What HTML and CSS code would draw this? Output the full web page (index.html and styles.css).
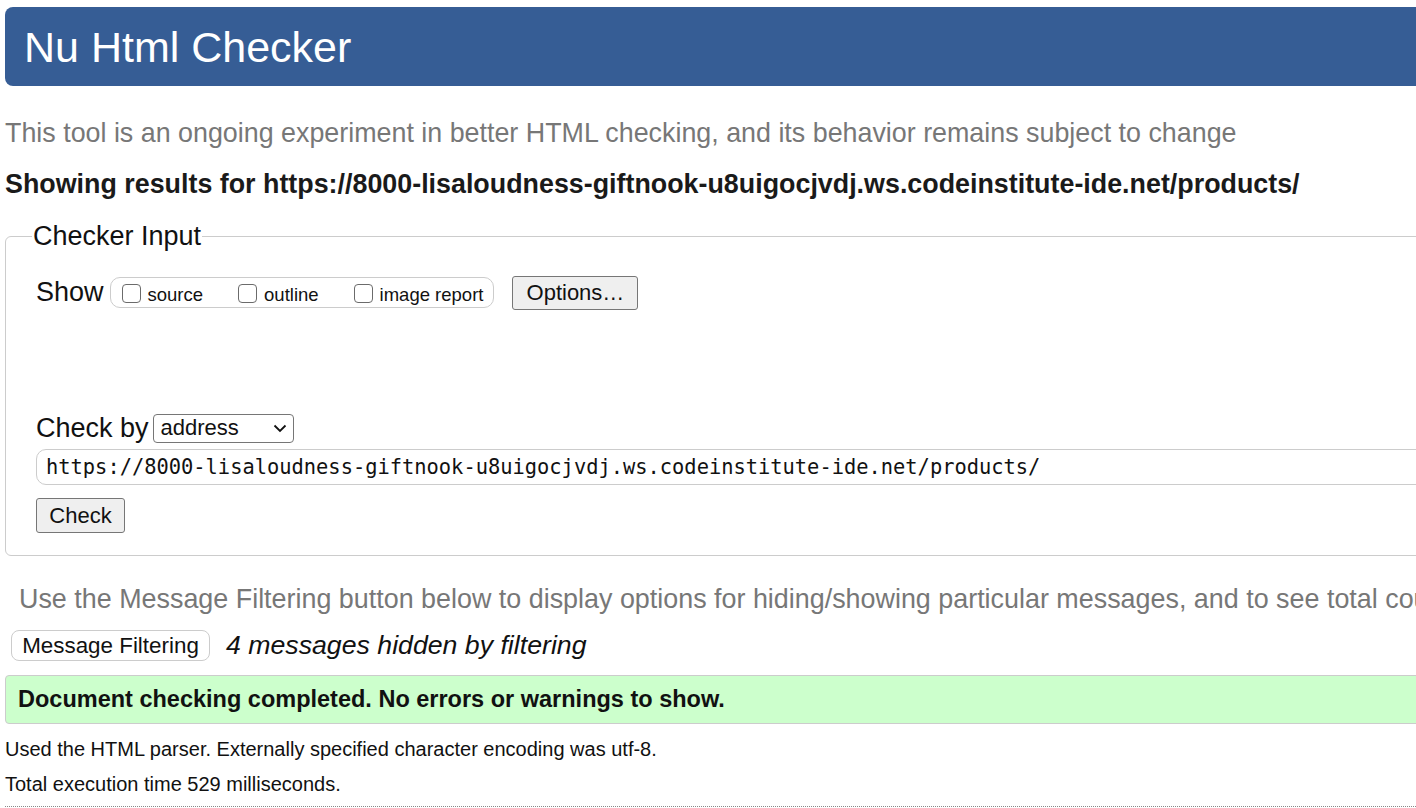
FILE: index.html
```html
<!DOCTYPE html>
<html lang="en">
<head>
<meta charset="utf-8">
<title>Nu Html Checker</title>
<link rel="stylesheet" href="styles.css">
</head>
<body>
<div class="page">
  <h1 class="banner">Nu Html Checker</h1>
  <p class="intro">This tool is an ongoing experiment in better HTML checking, and its behavior remains subject to change</p>
  <p class="results">Showing results for https://8000-lisaloudness-giftnook-u8uigocjvdj.ws.codeinstitute-ide.net/products/</p>
  <fieldset class="checker">
    <legend class="legend">Checker Input</legend>
    <div class="show-row">
      <span class="show-label">Show</span>
      <span class="checks">
        <label class="check"><span class="box"></span>source</label>
        <label class="check"><span class="box"></span>outline</label>
        <label class="check"><span class="box"></span>image report</label>
      </span>
      <button class="btn btn-options" type="button">Options…</button>
    </div>
    <div class="checkby-row">
      <span class="checkby-label">Check by</span>
      <span class="select">address<svg class="chev" width="14" height="9" viewBox="0 0 14 9"><path d="M1.5 1.5 L7 7 L12.5 1.5" fill="none" stroke="#111" stroke-width="1.8"/></svg></span>
    </div>
    <div class="url">https://8000-lisaloudness-giftnook-u8uigocjvdj.ws.codeinstitute-ide.net/products/</div>
    <button class="btn btn-check" type="button">Check</button>
  </fieldset>
  <p class="filter-note">Use the Message Filtering button below to display options for hiding/showing particular messages, and to see total counts of errors and warnings.</p>
  <div class="filter-row">
    <button class="btn-filter" type="button">Message Filtering</button>
    <span class="hidden-note">4 messages hidden by filtering</span>
  </div>
  <div class="success">Document checking completed. No errors or warnings to show.</div>
  <p class="details">Used the HTML parser. Externally specified character encoding was utf-8.</p>
  <p class="details details-time">Total execution time 529 milliseconds.</p>
  <hr class="dotted">
</div>
</body>
</html>
```
FILE: styles.css
```css
html, body {
  margin: 0;
  padding: 0;
  background: #fff;
  overflow: hidden;
}
body {
  font-family: "Liberation Sans", Arial, sans-serif;
  color: #111;
}
.page {
  width: 1800px;
  padding: 7px 0 0 5px;
  box-sizing: border-box;
}
.banner {
  margin: 0;
  height: 79px;
  background: #365d95;
  color: #fff;
  font-weight: normal;
  font-size: 43px;
  line-height: 80px;
  padding-left: 19px;
  border-radius: 8px 0 0 8px;
}
.intro {
  margin: 0;
  color: #777;
  font-size: 26.85px;
  line-height: 30px;
  padding-top: 32px;
}
.results {
  margin: 0;
  font-weight: bold;
  font-size: 26.85px;
  line-height: 30px;
  padding-top: 21px;
  color: #1a1a1a;
}
.checker {
  margin: 22px 0 0 0;
  border: 1px solid #ccc;
  border-radius: 6px 0 0 6px;
  padding: 0 0 22px 30px;
}
.legend {
  font-size: 27px;
  padding: 0 1px;
  margin-left: -4px;
  line-height: 30px;
}
.show-row {
  display: flex;
  align-items: center;
  margin-top: 25px;
  height: 33px;
}
.show-label {
  font-size: 27px;
  margin-right: 6px;
}
.checks {
  display: flex;
  align-items: center;
  border: 1px solid #ccc;
  border-radius: 10px;
  height: 31px;
  padding: 0 10px 0 11px;
  box-sizing: border-box;
  gap: 35px;
}
.check {
  display: flex;
  align-items: flex-end;
  font-size: 18.5px;
  line-height: 20px;
  padding-top: 3px;
}
.box {
  display: inline-block;
  width: 19px;
  height: 19px;
  border: 1px solid #6b6b6b;
  border-radius: 4px;
  box-sizing: border-box;
  margin-right: 7px;
  margin-bottom: 2px;
}
.btn {
  font-family: "Liberation Sans", Arial, sans-serif;
  background: #efefef;
  border: 1px solid #767676;
  border-radius: 3px;
  color: #111;
  padding: 0;
}
.btn-options {
  margin-left: 18px;
  width: 126px;
  height: 34px;
  font-size: 22px;
}
.checkby-row {
  display: flex;
  align-items: center;
  margin-top: 104px;
  height: 30px;
}
.checkby-label {
  font-size: 27px;
  margin-right: 4px;
}
.select {
  display: flex;
  align-items: center;
  justify-content: space-between;
  width: 141px;
  height: 29px;
  border: 1px solid #767676;
  border-radius: 4px;
  box-sizing: border-box;
  font-size: 22px;
  padding: 0 6px 0 7px;
}
.url {
  margin-top: 6px;
  height: 36px;
  border: 1px solid #ccc;
  border-radius: 10px;
  box-sizing: border-box;
  font-family: "DejaVu Sans Mono", "Liberation Mono", monospace;
  font-size: 20.4px;
  line-height: 34px;
  padding-left: 9px;
}
.btn-check {
  margin-top: 13px;
  width: 89px;
  height: 35px;
  font-size: 22px;
  display: block;
}
.filter-note {
  margin: 0;
  padding: 28px 0 0 14px;
  font-size: 26.9px;
  line-height: 30px;
  color: #777;
  white-space: nowrap;
}
.filter-row {
  display: flex;
  align-items: center;
  margin-top: 16px;
  padding-left: 6px;
  height: 31px;
}
.btn-filter {
  font-family: "Liberation Sans", Arial, sans-serif;
  background: #fff;
  border: 1px solid #ccc;
  border-radius: 8px;
  height: 31px;
  width: 199px;
  font-size: 22.4px;
  color: #111;
  padding: 0;
}
.hidden-note {
  font-style: italic;
  font-size: 26.7px;
  margin-left: 16px;
}
.success {
  margin-top: 14px;
  height: 49px;
  box-sizing: border-box;
  background: #ccffcc;
  border: 1px solid #ccc;
  border-radius: 4px 0 0 4px;
  font-weight: bold;
  font-size: 23.5px;
  line-height: 46px;
  padding-left: 12px;
}
.details {
  margin: 0;
  font-size: 20px;
  line-height: 22px;
  padding-top: 14px;
  color: #111;
}
.details-time {
  padding-top: 13px;
}
.dotted {
  margin: 11px 0 0 0;
  border: 0;
  border-top: 1px dotted #888;
  height: 0;
}
```
